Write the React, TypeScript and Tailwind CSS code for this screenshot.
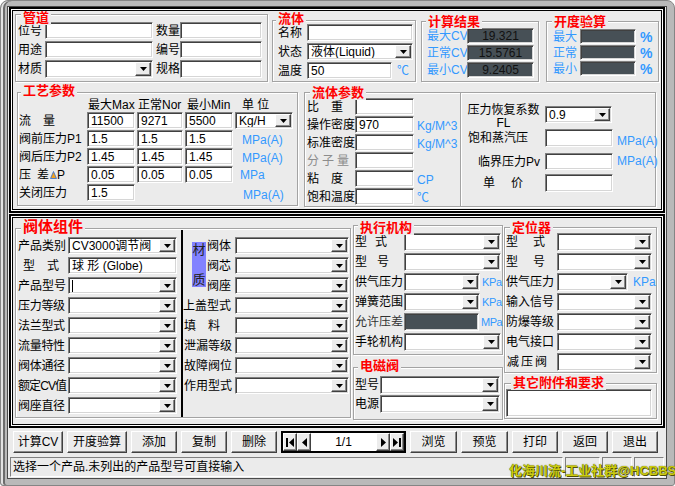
import React from "react";

const sunk =
  "border border-t-[#808080] border-l-[#808080] border-r-white border-b-white shadow-[inset_1px_1px_0_#404040,inset_-1px_-1px_0_#d6d6d6]";
const raised =
  "border border-t-white border-l-white border-r-[#404040] border-b-[#404040] shadow-[inset_-1px_-1px_0_#8a8a8a]";
const blue = "text-[#3399ff]";
const panel =
  "border-2 border-black shadow-[inset_0_0_0_1px_#fff,inset_0_0_0_2px_#000] p-[2px]";

function Arrow() {
  return (
    <svg width="7" height="4" viewBox="0 0 7 4">
      <path d="M0 0h7L3.5 4z" fill="#000" />
    </svg>
  );
}

function Field({ w, h = "h-[17px]", dark, children }: { w: string; h?: string; dark?: boolean; children?: React.ReactNode }) {
  return (
    <div
      className={`${w} ${h} shrink-0 ${sunk} flex items-center overflow-hidden whitespace-nowrap ${
        dark ? "bg-[#475056] justify-center text-[#111]" : "bg-white pl-[3px]"
      }`}
    >
      {children}
    </div>
  );
}

function Select({ w, h = "h-[17px]", v, caret }: { w: string; h?: string; v?: string; caret?: boolean }) {
  return (
    <div className={`${w} ${h} shrink-0 bg-white ${sunk} flex items-stretch p-[1px]`}>
      <span className="flex-1 flex items-center pl-[2px] overflow-hidden whitespace-nowrap">
        {caret ? <span className="w-px h-[12px] bg-black" /> : v}
      </span>
      <span className={`w-[16px] shrink-0 bg-[#ececec] ${raised} flex items-center justify-center`}>
        <Arrow />
      </span>
    </div>
  );
}

function Group({ title, cls, tcls, children }: { title: string; cls: string; tcls: string; children?: React.ReactNode }) {
  return (
    <div className={`relative shrink-0 border border-[#a3a3a3] shadow-[inset_1px_1px_0_#fff,1px_1px_0_#fff] ${cls}`}>
      <span className={`absolute px-[2px] bg-[#ebebeb] text-[#ff0000] font-bold whitespace-nowrap ${tcls}`}>{title}</span>
      {children}
    </div>
  );
}

function Btn({ w, children }: { w: string; children: React.ReactNode }) {
  return (
    <div className={`${w} h-[22px] shrink-0 bg-[#ececec] ${raised} flex items-center justify-center text-[12px]`}>{children}</div>
  );
}

function NavBtn({ children }: { children: React.ReactNode }) {
  return <div className={`w-[14px] h-full shrink-0 bg-[#ececec] ${raised} flex items-center justify-center`}>{children}</div>;
}

export default function App() {
  const left9 = ["压力等级", "法兰型式", "流量特性", "阀体通径", "额定CV值", "阀座直径"];
  const right5 = [
    <>填<span className="ml-[12px]">料</span></>,
    "泄漏等级",
    "故障阀位",
    "作用型式",
  ];

  return (
    <div className="relative w-[675px] h-[486px] bg-[#b9b9b9] border border-[#858585] rounded-t-[8px] rounded-b-[3px] pt-[5px] pl-[6px] pr-[7px] pb-[6px] shadow-[inset_2px_0_0_#e2e2e2,inset_4px_0_0_#6c6c6c] font-['Liberation_Sans','Noto_Sans_CJK_SC',sans-serif] text-[12px] text-black leading-none whitespace-nowrap">
      <div className="h-[473px] bg-[#ebebeb] border border-[#4a4a4a]">
        {/* top panel */}
        <div className={`ml-[1px] w-[656px] h-[206px] ${panel}`}>
          <div className="flex items-start">
            <Group title="管道" cls="ml-[2px] mt-[3px] w-[253px] h-[68px]" tcls="left-[5px] -top-[4px] text-[13px] leading-[14px]">
              <div className="pt-[7px] flex flex-col gap-[2px]">
                <div className="flex items-center h-[17px]">
                  <span className="w-[29px] pl-[2px] shrink-0">位号</span>
                  <Field w="w-[108px]" />
                  <span className="w-[27px] pl-[3px] shrink-0">数量</span>
                  <Field w="w-[82px]" />
                </div>
                <div className="flex items-center h-[17px]">
                  <span className="w-[29px] pl-[2px] shrink-0">用途</span>
                  <Field w="w-[108px]" />
                  <span className="w-[27px] pl-[3px] shrink-0">编号</span>
                  <Field w="w-[82px]" />
                </div>
                <div className="flex items-center h-[18px]">
                  <span className="w-[29px] pl-[2px] shrink-0">材质</span>
                  <Select w="w-[108px]" h="h-[18px]" />
                  <span className="w-[27px] pl-[3px] shrink-0">规格</span>
                  <Field w="w-[82px]" h="h-[18px]" />
                </div>
              </div>
            </Group>

            <Group title="流体" cls="ml-[4px] mt-[9px] w-[144px] h-[62px]" tcls="left-[3px] -top-[8px] text-[13px] leading-[11px]">
              <div className="pt-[3px] flex flex-col gap-[2px]">
                <div className="flex items-center h-[17px]">
                  <span className="w-[34px] pl-[5px] shrink-0">名称</span>
                  <Field w="w-[106px]" />
                </div>
                <div className="flex items-center h-[17px]">
                  <span className="w-[34px] pl-[5px] shrink-0">状态</span>
                  <Select w="w-[106px]" v="液体(Liquid)" />
                </div>
                <div className="flex items-center h-[17px]">
                  <span className="w-[34px] pl-[5px] shrink-0">温度</span>
                  <Field w="w-[85px]">50</Field>
                  <span className={`ml-[5px] ${blue}`}>℃</span>
                </div>
              </div>
            </Group>

            <Group title="计算结果" cls="ml-[5px] mt-[10px] w-[118px] h-[61px]" tcls="left-[4px] -top-[7px] text-[13px] leading-[14px]">
              <div className="pt-[6px] flex flex-col gap-[1px]">
                {[
                  ["最大CV", "19.321"],
                  ["正常CV", "15.5761"],
                  ["最小CV", "9.2405"],
                ].map(([l, v]) => (
                  <div key={l} className="flex items-center h-[16px]">
                    <span className={`w-[45px] pl-[5px] shrink-0 ${blue}`}>{l}</span>
                    <Field w="w-[67px]" h="h-[16px]" dark>
                      {v}
                    </Field>
                  </div>
                ))}
              </div>
            </Group>

            <Group title="开度验算" cls="ml-[7px] mt-[10px] w-[113px] h-[61px]" tcls="left-[5px] -top-[7px] text-[13px] leading-[14px]">
              <div className="pt-[7px] flex flex-col gap-[1px]">
                {["最大", "正常", "最小"].map((l) => (
                  <div key={l} className="flex items-center h-[15px]">
                    <span className={`w-[33px] pl-[6px] shrink-0 ${blue}`}>{l}</span>
                    <Field w="w-[56px]" h="h-[15px]" dark />
                    <span className={`ml-[4px] font-bold text-[14px] ${blue}`}>%</span>
                  </div>
                ))}
              </div>
            </Group>
          </div>

          <div className="flex items-start mt-[10px]">
            <Group title="工艺参数" cls="ml-[4px] w-[281px] h-[114px]" tcls="left-[3px] -top-[9px] text-[13px] leading-[14px]">
              <div className="pt-[4px]">
                <div className="flex items-center h-[15px]">
                  <span className="w-[70px] shrink-0" />
                  <span className="w-[50px] shrink-0">最大Max</span>
                  <span className="w-[49px] shrink-0">正常Nor</span>
                  <span className="w-[55px] shrink-0">最小Min</span>
                  <span>单 位</span>
                </div>
                <div className="flex flex-col gap-[1px]">
                  <div className="flex items-center h-[17px]">
                    <span className="w-[69px] pl-[1px] shrink-0">流　量</span>
                    <Field w="w-[48px]">11500</Field>
                    <span className="ml-[2px]" />
                    <Field w="w-[46px]">9271</Field>
                    <span className="ml-[2px]" />
                    <Field w="w-[48px]">5500</Field>
                    <span className="ml-[2px]" />
                    <Select w="w-[58px]" v="Kg/H" />
                  </div>
                  {[
                    ["阀前压力P1", "1.5", "MPa(A)"],
                    ["阀后压力P2", "1.45", "MPa(A)"],
                  ].map(([l, v, u]) => (
                    <div key={l} className="flex items-center h-[17px]">
                      <span className="w-[69px] pl-[1px] shrink-0">{l}</span>
                      <Field w="w-[48px]">{v}</Field>
                      <span className="ml-[2px]" />
                      <Field w="w-[46px]">{v}</Field>
                      <span className="ml-[2px]" />
                      <Field w="w-[48px]">{v}</Field>
                      <span className={`ml-[9px] mt-[3px] ${blue}`}>{u}</span>
                    </div>
                  ))}
                  <div className="flex items-center h-[17px]">
                    <span className="w-[69px] pl-[1px] shrink-0 flex items-center">
                      压<span className="ml-[6px]">差</span>
                      <svg width="7" height="8" viewBox="0 0 7 8" className="ml-[1px]">
                        <path d="M3.5 0.5L6.5 7.5H0.5z" fill="#f0a020" stroke="#2a6cd8" strokeWidth="0.8" />
                      </svg>
                      P
                    </span>
                    <Field w="w-[48px]">0.05</Field>
                    <span className="ml-[2px]" />
                    <Field w="w-[46px]">0.05</Field>
                    <span className="ml-[2px]" />
                    <Field w="w-[48px]">0.05</Field>
                    <span className={`ml-[7px] ${blue}`}>MPa</span>
                  </div>
                  <div className="flex items-center h-[17px]">
                    <span className="w-[69px] pl-[1px] shrink-0">关闭压力</span>
                    <Field w="w-[48px]">1.5</Field>
                    <span className={`ml-[108px] mt-[4px] ${blue}`}>MPa(A)</span>
                  </div>
                </div>
              </div>
            </Group>

            <Group title="流体参数" cls="ml-[6px] w-[352px] h-[115px]" tcls="left-[5px] -top-[7px] text-[13px] leading-[14px]">
              <div className="flex h-full">
                <div className="w-[155px] shrink-0 pt-[5px] flex flex-col gap-[1px]">
                  {[
                    [<>比<span className="ml-[12px]">重</span></>, "", ""],
                    ["操作密度", "970", "Kg/M^3"],
                    ["标准密度", "", "Kg/M^3"],
                    [<span className="text-[#8c8c8c] tracking-[3px]">分子量</span>, "", ""],
                    [<>粘<span className="ml-[12px]">度</span></>, "", "CP"],
                    ["饱和温度", "", "℃"],
                  ].map(([l, v, u], i) => (
                    <div key={i} className="flex items-center h-[17px]">
                      <span className="w-[50px] pl-[2px] shrink-0">{l}</span>
                      <Field w="w-[59px]">{v}</Field>
                      <span className={`ml-[3px] mt-[2px] ${blue}`}>{u}</span>
                    </div>
                  ))}
                </div>
                <div className="w-[2px] shrink-0 border-l border-l-[#a3a3a3] bg-white" />
                <div className="pt-[11px] flex flex-col">
                  <div className="flex items-start">
                    <div className="w-[83px] shrink-0 flex flex-col items-center gap-[1px] leading-[12px]">
                      <span>压力恢复系数</span>
                      <span>FL</span>
                    </div>
                    <div className="mt-[2px]">
                      <Select w="w-[67px]" h="h-[17px]" v="0.9" />
                    </div>
                  </div>
                  <div className="flex items-center h-[18px]">
                    <span className="w-[83px] pl-[6px] shrink-0">饱和蒸汽压</span>
                    <Field w="w-[68px]" h="h-[18px]" />
                    <span className={`ml-[4px] mt-[6px] ${blue}`}>MPa(A)</span>
                  </div>
                  <div className="flex items-center h-[17px] mt-[6px]">
                    <span className="w-[83px] pr-[5px] text-right shrink-0">临界压力Pv</span>
                    <Field w="w-[68px]" />
                    <span className={`ml-[4px] -mt-[2px] ${blue}`}>MPa(A)</span>
                  </div>
                  <div className="flex items-center h-[18px] mt-[4px]">
                    <span className="w-[83px] pl-[21px] shrink-0">
                      单<span className="ml-[16px]">价</span>
                    </span>
                    <Field w="w-[68px]" h="h-[18px]" />
                  </div>
                </div>
              </div>
            </Group>
          </div>
        </div>

        {/* bottom panel */}
        <div className={`ml-[1px] mt-[1px] w-[656px] h-[214px] ${panel} flex items-start`}>
          <Group title="阀体组件" cls="ml-[2px] mt-[10px] w-[336px] h-[190px]" tcls="left-[5px] -top-[10px] text-[15px] leading-[16px]">
            <div className="flex">
              <div className="w-[165px] shrink-0 pt-[8px] flex flex-col gap-[3px]">
                <div className="flex items-center h-[17px]">
                  <span className="w-[52px] pl-[2px] shrink-0">产品类别</span>
                  <Select w="w-[109px]" v="CV3000调节阀" />
                </div>
                <div className="flex items-center h-[17px]">
                  <span className="w-[52px] pl-[7px] shrink-0">型　式</span>
                  <Field w="w-[109px]">球 形 (Globe)</Field>
                </div>
                <div className="flex items-center h-[17px]">
                  <span className="w-[52px] pl-[2px] shrink-0">产品型号</span>
                  <Select w="w-[109px]" caret />
                </div>
                {left9.map((l) => (
                  <div key={l} className="flex items-center h-[17px]">
                    <span className={`w-[52px] pl-[2px] shrink-0 ${l.includes("CV") ? "tracking-[-0.9px]" : "tracking-[-0.3px]"}`}>{l}</span>
                    <Select w="w-[109px]" />
                  </div>
                ))}
              </div>
              <div className="w-[2px] h-[187px] mt-[1px] bg-black shrink-0" />
              <div className="pt-[8px] flex flex-col gap-[3px]">
                <div className="flex items-start">
                  <div className="ml-[9px] mt-[5px] w-[14px] h-[45px] bg-[#8282ff] flex flex-col items-center justify-between text-[13px] leading-[15px] text-[#222] shrink-0">
                    <span>材</span>
                    <span>质</span>
                  </div>
                  <div className="ml-[1px] flex flex-col gap-[3px]">
                    {["阀体", "阀芯", "阀座"].map((l) => (
                      <div key={l} className="flex items-center h-[17px]">
                        <span className="w-[28px] shrink-0">{l}</span>
                        <Select w="w-[114px]" />
                      </div>
                    ))}
                  </div>
                </div>
                <div className="flex items-center h-[17px]">
                  <span className="w-[52px] shrink-0">上盖型式</span>
                  <Select w="w-[114px]" />
                </div>
                {right5.map((l, i) => (
                  <div key={i} className="flex items-center h-[17px]">
                    <span className="w-[52px] pl-[1px] shrink-0">{l}</span>
                    <Select w="w-[114px]" />
                  </div>
                ))}
              </div>
            </div>
          </Group>

          <div className="ml-[2px] mt-[7px] w-[150px] shrink-0 flex flex-col">
            <Group title="执行机构" cls="w-[150px] h-[130px]" tcls="left-[4px] -top-[5px] text-[13px] leading-[14px]">
              <div className="pt-[7px] flex flex-col gap-[2px]">
                <div className="flex items-center h-[18px]">
                  <span className="w-[50px] pl-[1px] shrink-0">
                    型<span className="ml-[8px]">式</span>
                  </span>
                  <Select w="w-[97px]" h="h-[18px]" />
                </div>
                <div className="flex items-center h-[18px]">
                  <span className="w-[50px] pl-[1px] shrink-0">
                    型<span className="ml-[10px]">号</span>
                  </span>
                  <Select w="w-[97px]" h="h-[18px]" />
                </div>
                {["供气压力", "弹簧范围"].map((l) => (
                  <div key={l} className="flex items-center h-[18px]">
                    <span className="w-[50px] pl-[1px] shrink-0">{l}</span>
                    <Select w="w-[76px]" h="h-[18px]" />
                    <span className={`ml-[2px] text-[11px] tracking-[-0.3px] ${blue}`}>KPa</span>
                  </div>
                ))}
                <div className="flex items-center h-[18px]">
                  <span className="w-[50px] pl-[1px] shrink-0 text-[#333]">允许压差</span>
                  <Field w="w-[75px]" h="h-[18px]" dark />
                  <span className={`ml-[2px] text-[11px] tracking-[-0.5px] ${blue}`}>MPa</span>
                </div>
                <div className="flex items-center h-[18px]">
                  <span className="w-[50px] pl-[1px] shrink-0">手轮机构</span>
                  <Select w="w-[97px]" h="h-[18px]" />
                </div>
              </div>
            </Group>
            <Group title="电磁阀" cls="mt-[12px] w-[150px] h-[53px]" tcls="left-[4px] -top-[9px] text-[13px] leading-[14px]">
              <div className="pt-[8px] flex flex-col gap-[1px]">
                {["型号", "电源"].map((l) => (
                  <div key={l} className="flex items-center h-[18px]">
                    <span className="w-[26px] pl-[1px] shrink-0">{l}</span>
                    <Select w="w-[120px]" h="h-[18px]" />
                  </div>
                ))}
              </div>
            </Group>
          </div>

          <div className="ml-[1px] mt-[9px] w-[153px] shrink-0 flex flex-col">
            <Group title="定位器" cls="w-[153px] h-[146px]" tcls="left-[5px] -top-[7px] text-[13px] leading-[14px]">
              <div className="pt-[5px] flex flex-col gap-[2px]">
                <div className="flex items-center h-[18px]">
                  <span className="w-[52px] pl-[1px] shrink-0">
                    型<span className="ml-[15px]">式</span>
                  </span>
                  <Select w="w-[95px]" h="h-[18px]" />
                </div>
                <div className="flex items-center h-[18px]">
                  <span className="w-[52px] pl-[1px] shrink-0">
                    型<span className="ml-[15px]">号</span>
                  </span>
                  <Select w="w-[95px]" h="h-[18px]" />
                </div>
                <div className="flex items-center h-[18px]">
                  <span className="w-[52px] pl-[1px] shrink-0">供气压力</span>
                  <Select w="w-[71px]" h="h-[18px]" />
                  <span className={`ml-[5px] ${blue}`}>KPa</span>
                </div>
                {["输入信号", "防爆等级", "电气接口"].map((l) => (
                  <div key={l} className="flex items-center h-[18px]">
                    <span className="w-[52px] pl-[1px] shrink-0">{l}</span>
                    <Select w="w-[95px]" h="h-[18px]" />
                  </div>
                ))}
                <div className="flex items-center h-[18px]">
                  <span className="w-[52px] pl-[2px] shrink-0 tracking-[2px]">减压阀</span>
                  <Select w="w-[95px]" h="h-[18px]" />
                </div>
              </div>
            </Group>
            <Group title="其它附件和要求" cls="mt-[10px] w-[153px] h-[36px]" tcls="left-[6px] -top-[8px] text-[13px] leading-[14px]">
              <div className="pt-[5px] pl-[1px]">
                <Field w="w-[146px]" h="h-[28px]" />
              </div>
            </Group>
          </div>
        </div>

        {/* buttons */}
        <div className="ml-[5px] mt-[3px] h-[22px] flex items-center gap-[4px]">
          <Btn w="w-[50px]">计算CV</Btn>
          <Btn w="w-[60px]">开度验算</Btn>
          <Btn w="w-[46px]">添加</Btn>
          <Btn w="w-[46px]">复制</Btn>
          <Btn w="w-[46px]">删除</Btn>
          <div className="w-[125px] h-[22px] shrink-0 border-2 border-black bg-white flex">
            <NavBtn>
              <svg width="8" height="9" viewBox="0 0 8 9">
                <rect x="0" y="0" width="2" height="9" fill="#000" />
                <path d="M8 0V9L3 4.5z" fill="#000" />
              </svg>
            </NavBtn>
            <NavBtn>
              <svg width="5" height="9" viewBox="0 0 5 9">
                <path d="M5 0V9L0 4.5z" fill="#000" />
              </svg>
            </NavBtn>
            <div className="flex-1 flex items-center justify-center text-[12px]">1/1</div>
            <NavBtn>
              <svg width="5" height="9" viewBox="0 0 5 9">
                <path d="M0 0V9L5 4.5z" fill="#000" />
              </svg>
            </NavBtn>
            <NavBtn>
              <svg width="8" height="9" viewBox="0 0 8 9">
                <path d="M0 0V9L5 4.5z" fill="#000" />
                <rect x="6" y="0" width="2" height="9" fill="#000" />
              </svg>
            </NavBtn>
          </div>
          <Btn w="w-[47px]">浏览</Btn>
          <Btn w="w-[47px]">预览</Btn>
          <Btn w="w-[46px]">打印</Btn>
          <Btn w="w-[46px]">返回</Btn>
          <Btn w="w-[46px]">退出</Btn>
        </div>

        {/* status bar */}
        <div className="ml-[2px] mt-[4px] h-[20px] flex gap-[2px]">
          <div className="w-[553px] h-full border border-t-[#808080] border-l-[#808080] border-r-white border-b-white flex items-center pl-[2px]">
            选择一个产品.未列出的产品型号可直接输入
          </div>
          <div className="w-[35px] h-full border border-t-[#808080] border-l-[#808080] border-r-white border-b-white" />
          <div className="w-[30px] h-full border border-t-[#808080] border-l-[#808080] border-r-white border-b-white" />
          <div className="w-[30px] h-full border border-t-[#808080] border-l-[#808080] border-r-white border-b-white" />
        </div>
      </div>

      <span className="absolute left-[508px] top-[462px] text-[13px] font-bold leading-[15px] text-[#cccc10] [text-shadow:0_0_1px_#3a3a00,1px_1px_0_#55550a]">
        化海川流-工业社群@HCBBS
      </span>
    </div>
  );
}
